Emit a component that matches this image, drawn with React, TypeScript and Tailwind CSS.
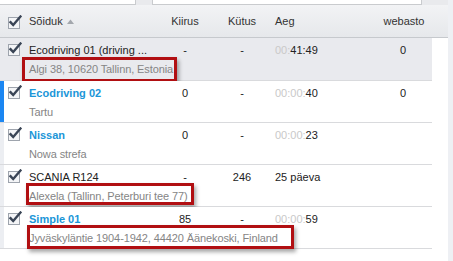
import React from "react";

const Check = () => (
  <svg width="14" height="14" viewBox="0 0 14 14" className="block">
    <rect x="0.5" y="2.5" width="11" height="11" fill="#f4f5f7" stroke="#9ea4ad" />
    <path d="M2.5 7.2 L5.2 10 L12.5 1.5" fill="none" stroke="#3a4556" strokeWidth="2.4" strokeLinecap="square" />
  </svg>
);

type Row = {
  name: string;
  bold?: boolean;
  sub: string;
  kiirus: string;
  kutus: string;
  pre?: string;
  aeg: string;
  web: string;
  active?: boolean;
  selected?: boolean;
  box?: { left: number; top: number; w: number; h: number };
};

const rows: Row[] = [
  { name: "Ecodriving 01 (driving ...", sub: "Algi 38, 10620 Tallinn, Estonia", kiirus: "-", kutus: "-", pre: "00:", aeg: "41:49", web: "0", selected: true, box: { left: 22, top: 19, w: 155, h: 25 } },
  { name: "Ecodriving 02", bold: true, sub: "Tartu", kiirus: "0", kutus: "-", pre: "00:00:", aeg: "40", web: "0", active: true },
  { name: "Nissan", bold: true, sub: "Nowa strefa", kiirus: "0", kutus: "-", pre: "00:00:", aeg: "23", web: "" },
  { name: "SCANIA R124", sub: "Alexela (Tallinn, Peterburi tee 77)", kiirus: "-", kutus: "246", aeg: "25 päeva", web: "", box: { left: 26, top: 18, w: 168, h: 22 } },
  { name: "Simple 01", bold: true, sub: "Jyväskyläntie 1904-1942, 44420 Äänekoski, Finland", kiirus: "85", kutus: "-", pre: "00:00:", aeg: "59", web: "", box: { left: 27, top: 18, w: 267, h: 24 } },
];

export default function App() {
  return (
    <div
      className="w-[453px] h-[261px] bg-white flex overflow-hidden text-[11px] text-[#222]"
      style={{ fontFamily: '"Liberation Sans", Arial, sans-serif' }}
    >
      <div className="w-[448px] flex flex-col">
        {/* top bar */}
        <div className="h-[5px] bg-[#e9eaed] flex">
          <div className="ml-[-1px] w-[137px] h-[5px] bg-white border border-t-0 border-[#c9cbce]" />
          <div className="ml-[16px] w-[270px] h-[5px] bg-white border border-t-0 border-[#c9cbce]" />
        </div>
        {/* header */}
        <div className="h-[33px] bg-gradient-to-b from-[#f2f3f5] to-[#e6e8eb] border-b border-[#c6c9cd] flex items-center text-[#333] leading-[14px]">
          <div className="w-[29px] pl-[8px] pt-[2px]">
            <Check />
          </div>
          <div className="w-[131px] flex items-center">
            <span>Sõiduk</span>
            <svg width="7" height="5" viewBox="0 0 7 5" className="ml-[4px]">
              <path d="M0 5 L3.5 0.5 L7 5 Z" fill="#a3a7ad" />
            </svg>
          </div>
          <div className="w-[50px] text-center">Kiirus</div>
          <div className="w-[64px] text-center">Kütus</div>
          <div className="w-[100px] pl-[1px]">Aeg</div>
          <div className="w-[60px] text-center">webasto</div>
        </div>
        {/* rows */}
        <div className="w-[432px] flex flex-col">
          {rows.map((r, i) => (
            <div
              key={i}
              className={`relative flex border-b border-[#d9dadd] ${i === 0 ? "h-[43px]" : "h-[42px]"} ${r.selected ? "bg-[#e9eaee]" : "bg-white"}`}
            >
              <div className={`w-[4px] shrink-0 ${r.active ? "bg-[#1b86f2]" : r.selected ? "bg-[#e9eaee]" : "bg-[#eceef2]"}`} />
              <div className="w-[25px] shrink-0 pl-[4px] pt-[4px]">
                <Check />
              </div>
              <div className="flex-1 flex flex-col pt-[5px] leading-[14px]">
                <div className="flex h-[14px]">
                  <div
                    className={`w-[131px] whitespace-nowrap ${r.bold ? "font-bold text-[#1b96d8]" : ""}`}
                  >
                    {r.name}
                  </div>
                  <div className="w-[50px] text-center">{r.kiirus}</div>
                  <div className="w-[64px] text-center">{r.kutus}</div>
                  <div className="w-[100px] pl-[1px] whitespace-nowrap">
                    {r.pre && <span className="text-[#c9c9c9]">{r.pre}</span>}
                    {r.aeg}
                  </div>
                  <div className="w-[58px] text-center">{r.web}</div>
                </div>
                <div className="mt-[5px] h-[14px] text-[#858585] whitespace-nowrap tracking-[-0.1px]">{r.sub}</div>
              </div>
              {r.box && (
                <div
                  className="absolute border-[3px] border-[#b10f12] shadow-[2px_3px_4px_rgba(0,0,0,0.35)]"
                  style={{ left: r.box.left, top: r.box.top, width: r.box.w, height: r.box.h }}
                />
              )}
            </div>
          ))}
        </div>
      </div>
      <div className="w-[5px] bg-[#eef0f4]" />
    </div>
  );
}
